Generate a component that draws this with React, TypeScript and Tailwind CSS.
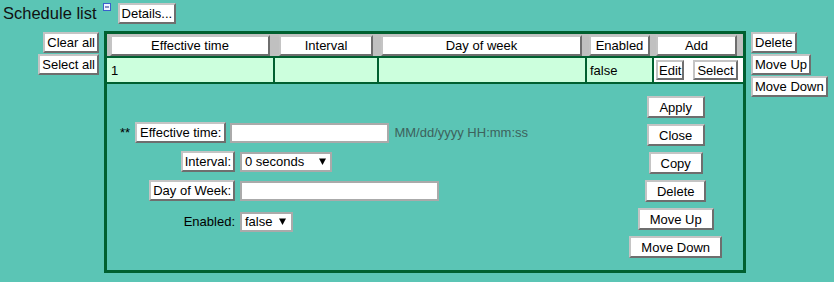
import React from "react";

const btn =
  "bg-white border-2 border-t-[#c4c4c4] border-l-[#c4c4c4] border-r-[#6e6e6e] border-b-[#6e6e6e] text-[13px] leading-[15px] text-black whitespace-nowrap flex items-center justify-center";

function Arrow() {
  return (
    <svg width="7" height="7" viewBox="0 0 7 7" className="shrink-0">
      <polygon points="0,0.5 7,0.5 3.5,7" fill="#000" />
    </svg>
  );
}

function MinusIcon() {
  return (
    <svg width="8" height="8" viewBox="0 0 8 8" className="shrink-0">
      <rect x="0.5" y="0.5" width="7" height="7" fill="#eef3ff" stroke="#3a5fcd" />
      <rect x="2" y="3.5" width="4" height="1" fill="#1a2f8a" />
    </svg>
  );
}

export default function App() {
  return (
    <div className="w-[834px] h-[282px] bg-[#5bc5b5] font-['Liberation_Sans',Arial,sans-serif] text-black overflow-hidden">
      {/* title row */}
      <div className="flex items-start h-[31px] pt-[3px] pl-[3px]">
        <span className="text-[16.5px] leading-[20px] text-[#111]">Schedule list</span>
        <div className="ml-[6px]">
          <MinusIcon />
        </div>
        <button className={btn + " ml-[7px] h-[21px] px-[2px]"}>Details...</button>
      </div>

      {/* main row */}
      <div className="flex items-start">
        {/* left buttons */}
        <div className="w-[104px] flex flex-col items-end pr-[5px] pt-[1px] gap-[1px]">
          <button className={btn + " h-[21px] px-[2px]"}>Clear all</button>
          <button className={btn + " h-[21px] px-[2px]"}>Select all</button>
        </div>

        {/* table */}
        <div className="w-[642px] h-[242px] border-[3px] border-[#006030] flex flex-col">
          {/* header */}
          <div className="grid grid-cols-[168px_104px_208px_67px_89px] h-[22px] bg-[#c0c0c0]">
            <div className="pl-[3px] pr-[5px] pt-[1px]">
              <button className={btn + " w-full h-[21px]"}>Effective time</button>
            </div>
            <div className="pl-[4px] pr-[6px] pt-[1px]">
              <button className={btn + " w-full h-[21px]"}>Interval</button>
            </div>
            <div className="pl-[2px] pr-[5px] pt-[1px]">
              <button className={btn + " w-full h-[21px]"}>Day of week</button>
            </div>
            <div className="pl-[2px] pr-[4px] pt-[1px]">
              <button className={btn + " w-full h-[21px]"}>Enabled</button>
            </div>
            <div className="pl-[2px] pr-[6px] pt-[1px]">
              <button className={btn + " w-full h-[21px]"}>Add</button>
            </div>
          </div>
          {/* data row */}
          <div className="grid grid-cols-[168px_104px_208px_67px_89px] h-[28px] border-y-2 border-[#006030] text-[13px] leading-[15px]">
            <div className="bg-[#ccffdd] border-r-2 border-[#006030] flex items-center pl-[4px]">1</div>
            <div className="bg-[#ccffdd] border-r-2 border-[#006030]"></div>
            <div className="bg-[#ccffdd] border-r-2 border-[#006030]"></div>
            <div className="bg-[#ccffdd] border-r-2 border-[#006030] flex items-center pl-[3px]">false</div>
            <div className="bg-white flex items-center pl-[2px] gap-[9px]">
              <button className={btn + " h-[20px] px-[1px]"}>Edit</button>
              <button className={btn + " h-[20px] px-[2px] bg-[#c8c8c8]"}>Select</button>
            </div>
          </div>
          {/* detail */}
          <div className="flex-1 flex items-center justify-between">
            <div className="pl-[13px] flex flex-col text-[13px] leading-[15px]">
              <div className="flex items-center h-[22px]">
                <span className="w-[15px]">**</span>
                <button className={btn + " h-[21px] px-[3px]"}>Effective time:</button>
                <div className="ml-[4px] w-[159px] h-[20px] bg-white border-2 border-[#aaaaaa]"></div>
                <span className="ml-[5px] text-[#3d625c]">MM/dd/yyyy HH:mm:ss</span>
              </div>
              <div className="grid grid-cols-[115px_auto] gap-x-[5px] mt-[7px] items-center">
                <div className="flex justify-end h-[22px] items-center">
                  <button className={btn + " h-[21px] px-[2px]"}>Interval:</button>
                </div>
                <div className="w-[92px] h-[20px] bg-white border-2 border-[#aaaaaa] flex items-center justify-between pl-[3px] pr-[4px]">
                  <span>0 seconds</span>
                  <Arrow />
                </div>
                <div className="flex justify-end h-[22px] items-center mt-[7px]">
                  <button className={btn + " h-[21px] px-[2px]"}>Day of Week:</button>
                </div>
                <div className="w-[199px] h-[20px] bg-white border-2 border-[#aaaaaa] mt-[7px]"></div>
                <div className="flex justify-end h-[22px] items-center mt-[9px]">
                  <span>Enabled:</span>
                </div>
                <div className="w-[53px] h-[20px] bg-white border-2 border-[#aaaaaa] flex items-center pl-[3px] mt-[9px]">
                  <span>false</span>
                  <span className="ml-[7px] flex">
                    <Arrow />
                  </span>
                </div>
              </div>
            </div>
            <div className="flex flex-col items-center gap-[6px] pr-[21px]">
              <button className={btn + " h-[22px] px-[10px] w-[58px]"}>Apply</button>
              <button className={btn + " h-[22px] px-[10px] w-[58px]"}>Close</button>
              <button className={btn + " h-[22px] px-[10px]"}>Copy</button>
              <button className={btn + " h-[22px] px-[10px]"}>Delete</button>
              <button className={btn + " h-[22px] px-[10px]"}>Move Up</button>
              <button className={btn + " h-[22px] px-[10px]"}>Move Down</button>
            </div>
          </div>
        </div>

        {/* right buttons */}
        <div className="flex flex-col items-start pl-[5px] pt-[1px] gap-[1px]">
          <button className={btn + " h-[21px] px-[2px]"}>Delete</button>
          <button className={btn + " h-[21px] px-[2px]"}>Move Up</button>
          <button className={btn + " h-[21px] px-[2px]"}>Move Down</button>
        </div>
      </div>
    </div>
  );
}
